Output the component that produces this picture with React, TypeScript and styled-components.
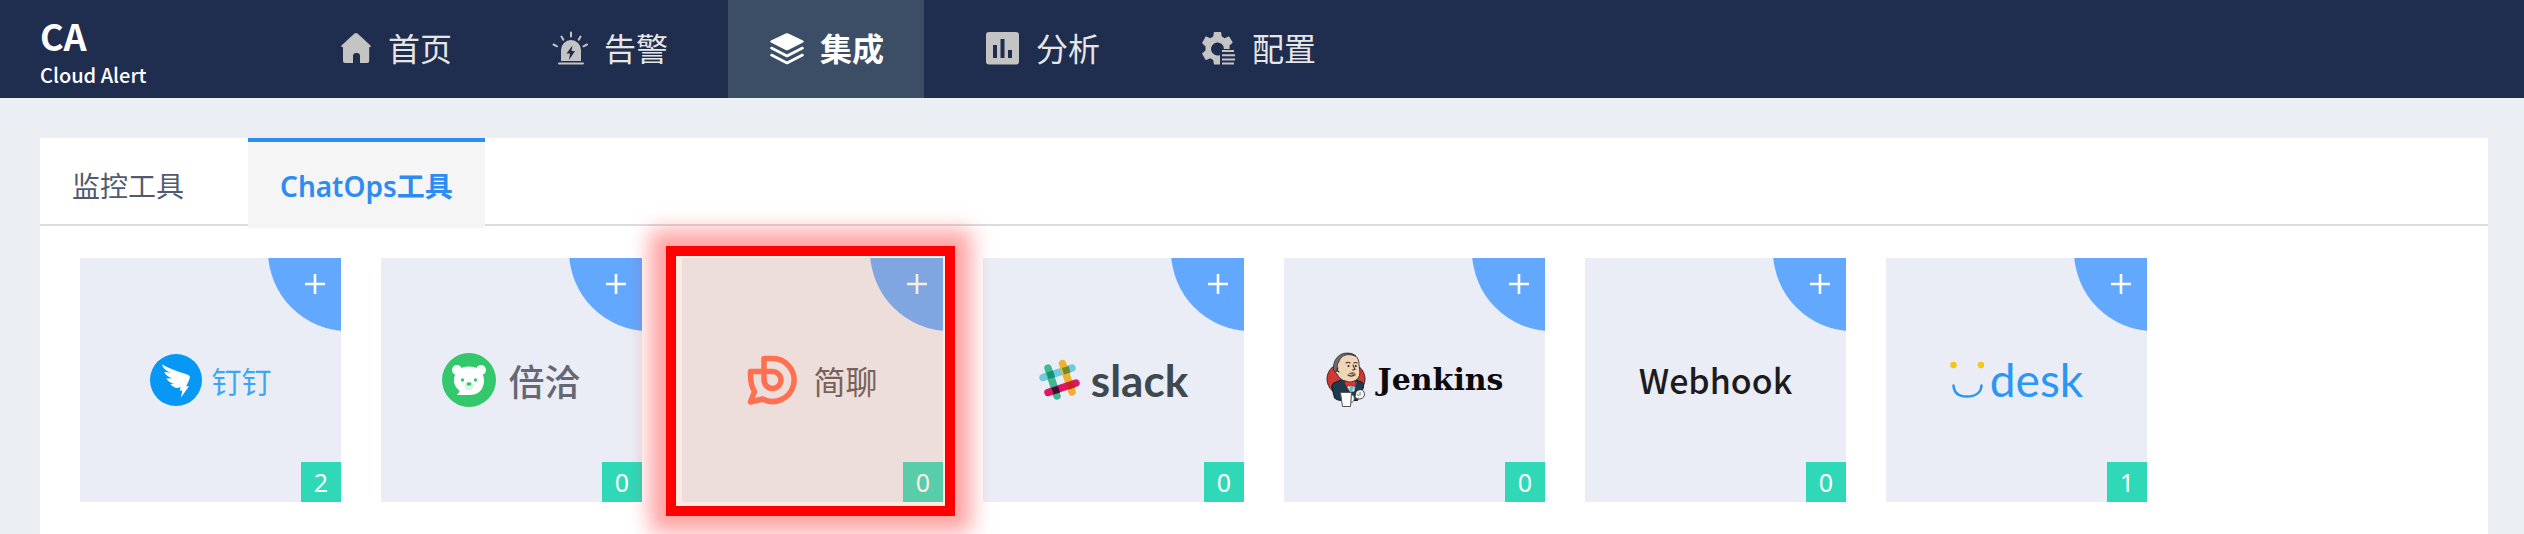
import React from 'react';
import styled, { createGlobalStyle, css } from 'styled-components';

const GlobalStyle = createGlobalStyle`
  *, *::before, *::after { box-sizing: border-box; }
  body {
    margin: 0;
    min-height: 100vh;
    background: #ebeff4;
    font-family: "Noto Sans", "Noto Sans CJK SC", sans-serif;
  }
  #root { min-height: 100vh; display: flex; flex-direction: column; }
`;

const Header = styled.header`
  display: flex;
  align-items: stretch;
  height: 98px;
  padding-left: 40px;
  background: #1f2d4e;
`;

const Brand = styled.a`
  display: flex;
  flex-direction: column;
  justify-content: center;
  width: 256px;
  color: #fff;
  text-decoration: none;
  font-family: "Noto Sans CJK SC", sans-serif;
`;

const BrandShort = styled.span`
  font-size: 36px;
  line-height: 52px;
  font-weight: 700;
`;

const BrandName = styled.span`
  font-size: 20px;
  line-height: 28px;
  font-weight: 500;
`;

const Nav = styled.nav`
  display: flex;
  gap: 20px;
`;

const NavLink = styled.a<{ $active?: boolean }>`
  display: flex;
  align-items: center;
  gap: 16px;
  padding: 0 40px;
  font-size: 32px;
  line-height: 44px;
  white-space: nowrap;
  text-decoration: none;
  color: #e6e6e6;
  svg { color: #c4c4c4; }
  ${p => p.$active && css`
    background: #3b4e66;
    color: #fff;
    font-weight: 700;
    svg { color: #fff; }
  `}
`;

const NavIcon = styled.svg.attrs({ width: 36, height: 36, viewBox: '0 0 36 36', 'aria-hidden': true })`
  flex: none;
`;

const Panel = styled.main`
  flex: 1;
  margin: 40px 36px 0 40px;
  background: #fff;
`;

const TabBar = styled.div`
  display: flex;
  gap: 32px;
  height: 88px;
  border-bottom: 2px solid #dcdce3;
`;

const Tab = styled.button<{ $active?: boolean }>`
  height: 90px;
  padding: 6px 32px 0;
  border: 0;
  background: none;
  font-family: inherit;
  font-size: 28px;
  line-height: 40px;
  color: #515a6e;
  cursor: pointer;
  ${p => p.$active && css`
    padding-top: 2px;
    border-top: 4px solid #2d8cf0;
    background: #f5f5f5;
    color: #2d8cf0;
    font-weight: 600;
  `}
`;

const ToolGrid = styled.ul`
  display: grid;
  grid-template-columns: repeat(8, 1fr);
  gap: 40px;
  margin: 0;
  padding: 32px 40px;
  list-style: none;
`;

const ToolItem = styled.li`
  position: relative;
`;

const ToolCard = styled.article`
  position: relative;
  display: flex;
  align-items: center;
  justify-content: center;
  height: 244px;
  overflow: hidden;
  background: #eaedf5;
`;

const AddButton = styled.button`
  position: absolute;
  top: 0;
  right: 0;
  width: 73px;
  height: 73px;
  padding: 0 0 22px 20px;
  border: 0;
  background: none;
  cursor: pointer;
  &::before {
    content: "";
    position: absolute;
    left: 0;
    bottom: 0;
    width: 160px;
    height: 160px;
    border-radius: 50%;
    background: #62a8fe;
  }
  svg { position: relative; display: block; margin: 0 auto; }
`;

const Count = styled.span`
  position: absolute;
  right: 0;
  bottom: 0;
  width: 40px;
  height: 40px;
  line-height: 40px;
  text-align: center;
  font-size: 25px;
  color: #fff;
  background: #2fd9b8;
`;

const Highlight = styled.div`
  position: absolute;
  z-index: 2;
  top: -12px;
  right: -12px;
  bottom: -14px;
  left: -16px;
  border: 10px solid #f00;
  background: rgba(248, 158, 115, 0.2);
  background-clip: padding-box;
  box-shadow: 0 0 20px 16px rgba(255, 0, 0, 0.37);
  pointer-events: none;
`;

const Logo = styled.div<{ $gap: number }>`
  display: flex;
  align-items: center;
  gap: ${p => p.$gap}px;
  svg { flex: none; display: block; }
`;

const Wordmark = styled.span<{ $size: number; $color: string; $weight?: number; $family?: string }>`
  font-family: ${p => p.$family ?? '"Noto Sans CJK SC"'}, sans-serif;
  font-size: ${p => p.$size}px;
  line-height: 48px;
  font-weight: ${p => p.$weight ?? 400};
  color: ${p => p.$color};
  white-space: nowrap;
`;

const HomeIcon = () => (
  <NavIcon>
    <path fill="currentColor" d="M20 2c.7 0 1.300.3 1.800.8L34 14c1.300 1.300 1 2-.8 2.200V30a2 2 0 0 1-2 2H24v-7a3 3 0 0 0-3-3h-1a3 3 0 0 0-3 3v7H9a2 2 0 0 1-2-2V16.200C5 16 4.700 15.300 6 14L18.200 2.800C18.700 2.300 19.300 2 20 2Z" />
  </NavIcon>
);

const AlarmIcon = () => (
  <NavIcon>
    <path fill="currentColor" fillRule="evenodd" d="M9 30V19a10 10 0 0 1 20 0v11ZM20.500 14.500l-6 8h3.500l-1 6.500 6-9h-3.500Z" />
    <path stroke="currentColor" strokeWidth="2" strokeLinecap="round" fill="none" d="M7 32.500h24M19 1.500v4M9.500 5.500l1.800 3.200M28.500 5.500l-1.800 3.200M1.500 13.500l3.500 1.800M35 13.500l-3.500 1.800" />
  </NavIcon>
);

const LayersIcon = () => (
  <NavIcon>
    <path fill="currentColor" d="M17.700 2.500q1.300-.7 2.600 0L35 9.600q1.500.9 0 1.800L20.300 18.900q-1.300.7-2.600 0L3 11.400q-1.500-.9 0-1.800Z" />
    <path stroke="currentColor" strokeWidth="2.600" strokeLinecap="round" strokeLinejoin="round" fill="none" d="M3.500 17 19 25l15.500-8M3.500 24 19 32l15.500-8" />
  </NavIcon>
);

const ChartIcon = () => (
  <NavIcon>
    <path fill="currentColor" fillRule="evenodd" d="M5 1h27a3 3 0 0 1 3 3v26.500a3 3 0 0 1-3 3H5a3 3 0 0 1-3-3V4a3 3 0 0 1 3-3ZM9 14v13h4V14ZM16.500 8v19h4V8ZM24 19v8h4v-8Z" />
  </NavIcon>
);

const GearIcon = () => (
  <NavIcon>
    <path fill="currentColor" fillRule="evenodd" d="M14 1h7l.8 4.600 2.900 1.700 4.300-2 3.800 6.200-3.300 3v3.500H24A6.500 6.500 0 1 0 20 24v9.500h-6l-.8-4.600-2.900-1.700-4.500 2L2 22.500l3.500-3v-4L2 12l3.800-6.700 4.500 2 2.900-1.700Z" />
    <path stroke="currentColor" strokeWidth="2" d="M22 20h12M22 24.200h13M22 28.400h13M22 32.400h12" />
  </NavIcon>
);

const DingTalkMark = () => (
  <svg width="52" height="52" viewBox="0 0 52 52" aria-hidden="true">
    <circle cx="26" cy="26" r="26" fill="#0797f5" />
    <path fill="#fff" d="M12 10.500c8 4.500 16 7 24.500 9.700 2.800.9 3.800 2 3.200 3.900-.8 3-2.200 5.500-3.600 8.200h2.900L31 43.500l1.300-7h-2.600l1-3.500c-1 .4-2 .7-3.300.9-2.800-.2-5.200-1.500-7-4l4-.3c-3-.4-6-1.800-8-5.100l6-.2c-4.200-1-7-3.200-8.200-6.500l7 1.200C16.500 17 13 14.500 12 10.500Z" />
  </svg>
);

const BearMark = () => (
  <svg width="54" height="54" viewBox="0 0 54 54" aria-hidden="true">
    <circle cx="27" cy="27" r="27" fill="#33c86b" />
    <circle cx="15" cy="17" r="5" fill="#fff" />
    <circle cx="39" cy="17" r="5" fill="#fff" />
    <path fill="#fff" d="M27 13.500c9.500 0 15 5.500 15 14C42 36 37 42 27 42H16c-1.200 0-1.300-.8-.3-1.300 2-.9 2.300-2.200 1-3.600-3-2.700-4.700-6-4.700-9.600 0-8.500 5.500-14 15-14Z" />
    <circle cx="20.500" cy="27" r="1.700" fill="#33c86b" />
    <circle cx="33.500" cy="27" r="1.700" fill="#33c86b" />
    <circle cx="27" cy="33" r="4.500" fill="#d9f3e2" />
    <ellipse cx="27" cy="31" rx="2.400" ry="1.700" fill="#33c86b" />
  </svg>
);

const JianliaoMark = () => (
  <svg width="50" height="50" viewBox="0 0 50 50" aria-hidden="true">
    <path fill="none" stroke="#ff6448" strokeWidth="5.500" strokeLinejoin="round" strokeLinecap="round" d="M17 25V3.500h8.500a21.500 21.500 0 1 1-10 40.500L3.500 47l4-10.500C4.500 32 3.200 25 3.500 16.500H25a8.500 8.500 0 1 1-8 8.500" />
  </svg>
);

const SlackMark = () => (
  <svg width="42" height="42" viewBox="0 0 42 42" aria-hidden="true">
    <g fill="none" strokeWidth="7.400" strokeLinecap="round">
      <path stroke="#70cadb" d="M4 18.500 33 9" />
      <path stroke="#ecb22e" d="M23.500 4.500 33 33" />
      <path stroke="#3eb991" d="M9 9l9 28" />
      <path stroke="#e01563" d="M9 33.500 37 24" />
    </g>
    <path fill="#178f77" d="m7.500 13.500 6.500-2 2 6.500-6.500 2Z" />
    <path fill="#6c8a30" d="m23 9 6.500-2 2 6.500-6.500 2Z" />
    <path fill="#cc2027" d="m27.500 24 6.500-2 2 6.500-6.500 2Z" />
    <path fill="#361238" d="m12.500 29 6.500-2 2 6.500-6.500 2Z" />
  </svg>
);

const JenkinsMark = () => (
  <svg width="40" height="56" viewBox="0 0 40 56" aria-hidden="true">
    <ellipse cx="20" cy="27" rx="19" ry="17" fill="#d33833" stroke="#43201f" />
    <path fill="#1f3a4d" stroke="#131a20" d="M17 27 8 31c-2 1-2.500 3-2 5l2.500 10c2 2 5 2.500 8 2.500h15l4-9c2-3 3-6 1-9l-9-3.500Z" />
    <path fill="#fff" stroke="#7e9baa" strokeWidth=".8" d="m19 31 5-2.500 6 2-2 9h-4Z" />
    <path fill="#81b0c4" d="m23 33 3-1 2 3-2 5h-2Z" />
    <path fill="#f0d6b7" stroke="#362d28" strokeWidth=".9" d="M9 12C11 5 16 1.500 22 1.500c7 0 11 4 11 11 0 3 1.500 7 .5 11-1 3-4 6-8 6.500-6 .5-12-2.500-14.500-8-2-1-3-3.500-2-6Z" />
    <path fill="#6d6b6d" stroke="#231f20" strokeWidth=".7" d="M7.500 18C6.500 9 12 1 21 1c4 0 7 1.200 9 3.500-5-2.500-10-2.500-13.500 0-3.500 2.500-3 5.500-5 7.500l-.5 7.500c-2 .3-3.300-.7-3.500-1.500Z" />
    <path fill="none" stroke="#40302a" strokeWidth="1.100" strokeLinecap="round" d="M20 11q2-1.500 4 0M28 11q1.500-1 3 0M27 13l2 4.500-2.500.5M22 23q4 2.500 7-.5M12 16q-2 2 1 4" />
    <circle cx="22.500" cy="14" r="1" fill="#231f20" />
    <circle cx="29.800" cy="14" r="1" fill="#231f20" />
    <path fill="#8a7968" d="M22 22q4-3.500 7-1l1 2.500q-4-1-8-1.500Z" />
    <path fill="#e5352d" stroke="#691f1c" strokeWidth=".7" d="m18.500 28.500 5.500 2 5.500-2v6l-5-1.500-4.500 2Z" />
    <path fill="#fff" stroke="#555" d="M14.500 40.500h11l-1 14h-8ZM25.500 43c4-.5 3.500 8-.5 7" />
    <path fill="#f4f4f4" stroke="#333" strokeWidth=".9" d="M30 40c2-3 7-3 8 0 1 2 .5 5-2 6.500-3 1-6 .5-7-1.500Z" />
    <path fill="none" stroke="#555" strokeWidth=".8" d="M34 40v3.500M31 42.500l2 1" />
  </svg>
);

const UdeskMark = () => (
  <svg width="34" height="38" viewBox="0 0 34 38" aria-hidden="true">
    <circle cx="3.500" cy="4" r="3.300" fill="#f7c61a" />
    <circle cx="31" cy="4" r="3.300" fill="#f7c61a" />
    <path fill="none" stroke="#2b97f5" strokeWidth="2.600" strokeLinecap="round" d="M3.500 24.500C4 32 9 35.500 17 35.500s14-3.500 14.500-11" />
  </svg>
);

const tabs = [
  { label: '监控工具' },
  { label: 'ChatOps工具', active: true },
];

const navItems = [
  { label: '首页', Icon: HomeIcon },
  { label: '告警', Icon: AlarmIcon },
  { label: '集成', Icon: LayersIcon, active: true },
  { label: '分析', Icon: ChartIcon },
  { label: '配置', Icon: GearIcon },
];

interface Tool {
  id: string;
  count: number;
  highlighted?: boolean;
  logo: React.ReactNode;
}

const tools: Tool[] = [
  { id: '钉钉', count: 2, logo: <Logo $gap={10}><DingTalkMark /><Wordmark $size={30} $color="#3ba6f3">钉钉</Wordmark></Logo> },
  { id: '倍洽', count: 0, logo: <Logo $gap={12}><BearMark /><Wordmark $size={36} $weight={500} $color="#656775">倍洽</Wordmark></Logo> },
  { id: '简聊', count: 0, highlighted: true, logo: <Logo $gap={16}><JianliaoMark /><Wordmark $size={32} $color="#555356">简聊</Wordmark></Logo> },
  { id: 'slack', count: 0, logo: <Logo $gap={10}><SlackMark /><Wordmark $size={44} $weight={700} $family="Lato" $color="#3d484f">slack</Wordmark></Logo> },
  { id: 'Jenkins', count: 0, logo: <Logo $gap={12}><JenkinsMark /><Wordmark $size={30} $weight={700} $family='"DejaVu Serif"' $color="#0b0b0d">Jenkins</Wordmark></Logo> },
  { id: 'Webhook', count: 0, logo: <Wordmark $size={34} $weight={500} $color="#1c1c1e">Webhook</Wordmark> },
  { id: 'Udesk', count: 1, logo: <Logo $gap={6}><UdeskMark /><Wordmark $size={46} $family="Lato" $color="#2b97f5">desk</Wordmark></Logo> },
];

export default function App() {
  return (
    <>
      <GlobalStyle />
      <Header>
        <Brand href="#">
          <BrandShort>CA</BrandShort>
          <BrandName>Cloud Alert</BrandName>
        </Brand>
        <Nav>
          {navItems.map(({ label, Icon, active }) => (
            <NavLink key={label} href="#" $active={active} aria-current={active ? 'page' : undefined}>
              <Icon />
              {label}
            </NavLink>
          ))}
        </Nav>
      </Header>
      <Panel>
        <TabBar role="tablist">
          {tabs.map(tab => (
            <Tab key={tab.label} type="button" role="tab" aria-selected={!!tab.active} $active={tab.active}>
              {tab.label}
            </Tab>
          ))}
        </TabBar>
        <ToolGrid>
          {tools.map(tool => (
            <ToolItem key={tool.id}>
              <ToolCard>
                {tool.logo}
                <AddButton type="button" aria-label={`添加${tool.id}`}>
                  <svg width="20" height="20" viewBox="0 0 20 20" aria-hidden="true">
                    <path stroke="#fff" strokeWidth="2.600" d="M10 0v20M0 10h20" />
                  </svg>
                </AddButton>
                <Count>{tool.count}</Count>
              </ToolCard>
              {tool.highlighted && <Highlight />}
            </ToolItem>
          ))}
        </ToolGrid>
      </Panel>
    </>
  );
}
